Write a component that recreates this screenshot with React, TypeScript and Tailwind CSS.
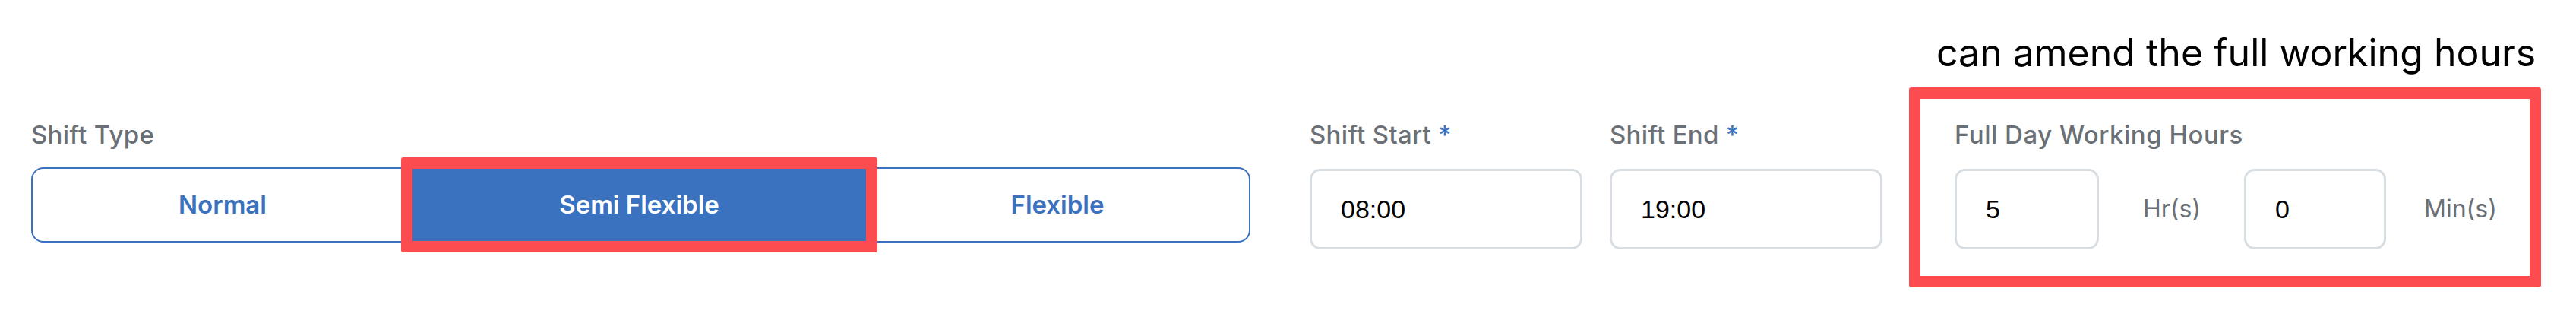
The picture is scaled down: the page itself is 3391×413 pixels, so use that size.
import React from "react";

const labelFont = { fontFamily: '"Inter", "Noto Sans", sans-serif' };

const ShiftTypeToggle: React.FC = () => {
  return (
    <div className="flex h-[99px] w-[1605px] border-2 border-[#3b72c0] rounded-[16px]">
      <div className="flex w-[500px] items-center justify-center text-[33px] font-semibold text-[#3b72c0]">
        Normal
      </div>
      <div className="relative flex w-[597px] items-center justify-center bg-[#3b72c0] text-[33px] font-semibold text-white">
        Semi Flexible
        {/* annotation box */}
        <div className="absolute -inset-[15px] border-[15px] border-[#fc4c50] rounded-[3px]" />
      </div>
      <div className="flex w-[504px] items-center justify-center text-[33px] font-semibold text-[#3b72c0]">
        Flexible
      </div>
    </div>
  );
};

const TimeInput: React.FC<{ value: string; width: string }> = ({
  value,
  width,
}) => (
  <input
    readOnly
    defaultValue={value}
    className={`${width} h-[106px] border-[3px] border-[#d9dee2] rounded-[14px] bg-white pl-[38px] text-[34px] text-black outline-none`}
    style={{ fontFamily: '"Liberation Sans", Arial, sans-serif' }}
  />
);

const App: React.FC = () => {
  return (
    <div
      className="flex h-[413px] w-full items-start bg-white pl-[41px]"
      style={labelFont}
    >
      <div className="mt-[157px] flex flex-col">
        <div className="h-[40px] text-[33px] leading-[40px] font-medium tracking-[0.3px] text-[#6a7075]">
          Shift Type
        </div>
        <div className="mt-[23px]">
          <ShiftTypeToggle />
        </div>
      </div>

      <div className="ml-[78px] mt-[157px] flex w-[359px] flex-col">
        <div className="h-[40px] text-[33px] leading-[40px] font-medium tracking-[0.3px] text-[#6a7075] whitespace-nowrap">
          Shift Start <span className="text-[#3b72c0]">*</span>
        </div>
        <div className="mt-[25px]">
          <TimeInput value="08:00" width="w-[359px]" />
        </div>
      </div>

      <div className="ml-[36px] mt-[157px] flex w-[359px] flex-col">
        <div className="h-[40px] text-[33px] leading-[40px] font-medium tracking-[0.3px] text-[#6a7075] whitespace-nowrap">
          Shift End <span className="text-[#3b72c0]">*</span>
        </div>
        <div className="mt-[25px]">
          <TimeInput value="19:00" width="w-[359px]" />
        </div>
      </div>

      <div className="ml-[35px] mt-[40px] flex flex-col">
        <div className="h-[58px] pl-[36px] text-[50px] leading-[58px] text-black whitespace-nowrap">
          can amend the full working hours
        </div>
        <div className="mt-[17px] w-[832px] border-[15px] border-[#fc4c50] rounded-[3px] pl-[45px] pr-[43px] pt-[27px] pb-[35px]">
          <div className="h-[40px] text-[33px] leading-[40px] font-medium tracking-[0.5px] text-[#6a7075] whitespace-nowrap">
            Full Day Working Hours
          </div>
          <div className="mt-[25px] flex items-center">
            <TimeInput value="5" width="w-[190px]" />
            <div className="w-[191px] pl-[58px] text-[32px] text-[#6a7075]">
              Hr(s)
            </div>
            <TimeInput value="0" width="w-[187px]" />
            <div className="pl-[50px] text-[32px] text-[#6a7075]">Min(s)</div>
          </div>
        </div>
      </div>
    </div>
  );
};

export default App;
